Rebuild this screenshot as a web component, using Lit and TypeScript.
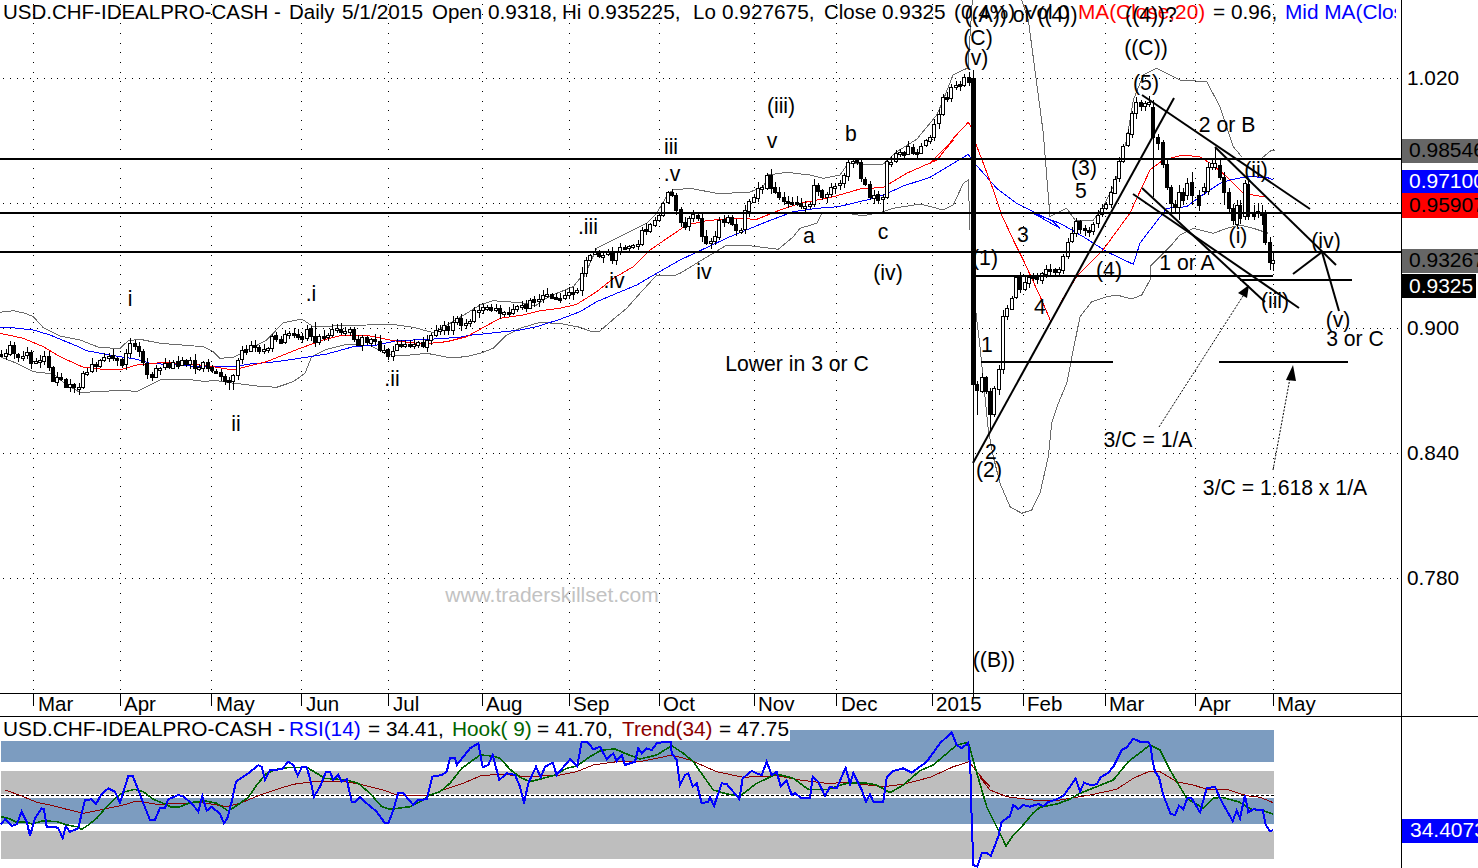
import { LitElement, html, css, svg } from "lit";
import { customElement } from "lit/decorators.js";

type P = [number, number];
const pts = (a: number[], ox: number, oy: number): P[] => {
  const o: P[] = [];
  for (let i = 0; i + 1 < a.length; i += 2) o.push([ox + a[i] / 3, oy + a[i + 1] / 3]);
  return o;
};
const str = (p: P[]) => p.map((q) => q[0].toFixed(1) + "," + q[1].toFixed(1)).join(" ");
const between = (p: P[], a: number, b: number) => p.filter((q) => q[0] >= a && q[0] <= b);

/* ---------- price chart overlays ---------- */
const upper = str([
  ...between(pts([0,187,40,182,75,190,100,200,130,233,180,258,240,270,300,293,360,295,385,272,420,268,480,280,610,290,640,305,660,325,700,322,745,300,800,270,850,218,905,207,940,230,1000,228,1100,225,1170,222,1240,232,1300,248,1350,220,1400,190,1450,155,1500,152], 0, 250), 0, 479),
  ...pts([0,165,40,152,80,155,140,160,165,168,190,150,230,130,280,110,300,85], 480, 250),
  ...between(pts([245,545,290,445,370,405,440,370,470,340,505,280,520,270,570,265,650,280,745,278,790,260,805,225,860,217,930,225,970,235,1020,225,1045,190,1090,192,1150,192,1190,155,1250,118,1310,45,1330,0], 500, 100), 581, 960),
  [953, 75], [963, 70], [968, 68], [973, -10], [1020, -10],
  ...pts([185,0,205,60,230,250,250,400,270,650,320,625,345,660,400,660,430,620,465,550,500,420,520,300,550,225,590,205,660,240,740,245,780,320,820,440,845,470], 960, 0),
]);
const upperEnd = str(pts([905,475,935,450,945,452], 960, 0));
const lower = str([
  ...between(pts([0,320,50,340,100,365,160,372,200,405,240,427,300,425,370,420,410,425,440,410,480,390,560,388,620,395,640,390,680,397,770,408,830,412,880,395,915,370,935,320,980,298,1040,283,1110,287,1160,310,1200,318,1280,310,1350,323,1400,320,1450,310,1500,285], 0, 250), 0, 479),
  ...pts([0,310,40,295,80,255,120,235,180,217,250,222,300,232,330,243,360,243,400,208,440,175,480,130,530,75,580,78,600,70], 480, 250),
  ...between(pts([680,435,750,437,835,448,880,410,900,385,950,370,965,340,1040,340,1090,347,1150,335,1180,325,1260,312,1330,330,1360,315,1390,250,1405,240,1410,390], 500, 100), 681, 980),
]);
const lower2 = str([
  ...pts([48,100,60,200,85,450,100,530,120,610,150,680,185,700,215,690,240,640,265,530,275,430,295,370,320,310,340,210,360,110,395,65,440,50,470,45,515,57,545,45,570,0], 960, 280),
  ...pts([570,800,630,740,660,705,700,685,760,700,800,685,840,675,880,685,925,700], 960, 0),
]);
const midMA = str([
  ...between(pts([0,232,45,234,100,240,150,255,230,288,260,302,330,315,410,328,450,340,530,345,600,350,700,350,750,342,830,335,930,320,980,312,1060,290,1130,285,1190,272,1290,268,1380,262,1430,252,1500,245], 0, 250), 0, 479),
  ...pts([0,253,120,240,170,230,240,208,300,185,350,155,410,130,470,105,530,70,600,30], 480, 250),
  ...between(pts([690,410,800,365,880,335,950,325,1015,320,1100,300,1150,285,1210,258,1290,232,1360,190,1405,163], 500, 100), 681, 975),
  ...pts([130,305,200,385,260,430,330,465,370,485,390,505], 930, 60),
  ...pts([220,640,300,670,370,710,440,755,520,793,540,730,570,690,620,625,680,620,720,590,780,550,810,540,860,530,920,532,940,540], 960, 0),
]);
const redMA = str([
  ...between(pts([0,250,70,265,130,290,180,320,250,352,300,357,370,357,410,345,480,338,560,340,640,350,700,360,800,335,900,295,970,270,1020,257,1110,258,1180,272,1270,282,1340,275,1400,260,1500,215], 0, 250), 0, 479),
  ...pts([0,238,60,205,130,195,180,182,240,175,290,163,350,125,400,85,460,50,510,0], 480, 250),
  ...between(pts([560,375,620,362,700,355,770,358,840,330,900,310,1000,290,1080,267,1150,262,1220,220,1310,180,1360,120], 500, 100), 681, 955),
  ...pts([0,310,30,290,70,235,115,187,125,205,135,245,160,310,190,390,215,465,250,540,280,600], 930, 60),
  ...pts([190,780,245,900], 960, 0),
  [1051, 322], [1062, 300], [1077, 276], [1103, 250], [1130, 213], [1150, 170], [1163, 160], [1183, 155], [1200, 157], [1213, 165], [1227, 177], [1243, 193], [1253, 195], [1265, 197],
]);

/* ---------- candles ---------- */
const closes: P[] = [
  ...pts([0,310,30,298,60,315,75,295,90,350,105,350,120,320,140,315,150,375,190,400,215,410,240,400,250,355,290,345,310,325,345,320,370,345,385,285,405,295,430,335,450,385,475,360,510,345,540,335,580,345,610,340,630,365,670,385,695,385,710,320,755,295,800,285,815,268,860,262,890,258,925,248,945,285,970,258,1010,238,1045,238,1060,270,1100,275,1150,295,1160,315,1190,275,1215,270,1245,288,1290,265,1320,245,1350,225,1400,205,1440,178,1470,180,1500,190], 0, 250),
  ...pts([130,595,180,590,210,565,243,565,246,487,270,460,340,468,355,435,390,440,415,435,420,390,470,360,505,265,530,320,545,375,590,350,605,415,640,420,655,380,665,350,690,355,720,400,730,330,755,295,800,235,815,270,840,295,880,315,910,320,935,320,940,248,970,300,985,270,1025,240,1040,195,1075,190,1085,240,1110,290,1158,288,1161,190,1185,165,1220,150,1240,155,1285,125,1310,50,1330,0], 500, 100),
  [945, 100], [955, 82], [971, 78], [973, 385], [977, 390], [982, 378], [990, 412], [995, 386], [1000, 367], [1002, 322], [1007, 312], [1012, 300],
  ...pts([160,810,175,860,200,830,220,840,240,820,260,815,290,810,320,745,345,665,365,680,385,680,420,645,450,590,470,530,485,450,510,370,520,310,540,315,575,320], 960, 0),
];
const interp = (x: number) => {
  for (let i = 1; i < closes.length; i++) {
    if (x <= closes[i][0]) {
      const [x0, y0] = closes[i - 1];
      const [x1, y1] = closes[i];
      return x1 === x0 ? y1 : y0 + ((y1 - y0) * (x - x0)) / (x1 - x0);
    }
  }
  return closes[closes.length - 1][1];
};
let seed = 12345;
const rnd = () => ((seed = (seed * 1103515245 + 12345) & 0x7fffffff) >>> 8) % 1000 / 1000;

const wickOverride: Record<number, [number?, number?]> = {
  231: [undefined, 390], 314: [322], 882: [undefined, 212],
  1003: [310], 977: [undefined, 415], 990: [undefined, 432],
};
/* x, top, bottom, up?, wick top, wick bottom: the last weeks, read bar by bar */
const lastBars: [number, number, number, boolean, number, number][] = [
  [1153,107,137,false,100,197],[1158,137,143,false,134,150],[1163,142,164,false,140,168],[1167,164,187,false,160,190],
  [1171,187,203,false,185,212],[1175,204,207,false,200,212],[1179,192,207,true,185,220],[1183,192,200,false,188,205],
  [1187,183,195,true,178,200],[1192,182,195,false,172,205],[1199,195,205,false,190,211],[1204,187,191,true,183,195],
  [1208,167,191,true,162,195],[1212,163,167,true,158,170],[1215,163,167,true,147,170],[1220,165,177,false,160,180],
  [1224,177,192,false,172,205],[1229,192,208,false,188,212],[1233,208,220,false,204,225],[1237,205,224,true,200,227],
  [1240,205,218,false,200,224],[1245,183,216,true,180,220],[1248,184,216,false,180,220],[1254,212,216,false,205,220],
  [1258,211,213,true,203,218],[1262,212,215,false,205,225],[1265,212,242,false,210,245],[1270,242,262,false,237,270],
  [1273,260,263,true,252,271],
];
const buildCandles = () => {
  let white = "", black = "", wick = "";
  const xs: number[] = [];
  for (let x = 973 - 4.3 * 226; x < 1150; x += 4.3) if (x > 0) xs.push(x);
  let prev = interp(xs[0]);
  for (const xf of xs) {
    const X = Math.round(xf);
    if (X === 973) { prev = 385; continue; }
    const c = interp(xf) + (rnd() - 0.5) * 9;
    const o = prev + (rnd() - 0.5) * 1.5;
    let top = Math.round(Math.min(o, c));
    let bot = Math.round(Math.max(o, c));
    if (bot - top < 2) bot = top + 2;
    let hi = top - Math.round(rnd() * 5) - 1;
    let lo = bot + Math.round(rnd() * 5) + 1;
    for (const k of Object.keys(wickOverride)) {
      if (Math.abs(+k - X) <= 2) {
        const [h, l] = wickOverride[+k];
        if (h !== undefined) hi = h;
        if (l !== undefined) lo = l;
      }
    }
    wick += `M${X + 0.5} ${hi}V${lo}`;
    const r = `M${X - 1.5} ${top + 0.5}h3v${bot - top}h-3z`;
    if (c < o) white += r; else black += r;
    prev = c;
  }
  for (const [X, top, bot, up, hi, lo] of lastBars) {
    wick += `M${X + 0.5} ${hi}V${lo}`;
    const r = `M${X - 1.5} ${top + 0.5}h3v${bot - top}h-3z`;
    if (up) white += r; else black += r;
  }
  return { white, black, wick };
};
const candles = buildCandles();

/* ---------- RSI ---------- */
const rsi = str([
  ...pts([3,403,15,388,35,408,50,403,65,365,80,395,90,438,105,385,125,355,132,358,140,410,165,410,175,415,188,444,197,410,210,425,235,415,245,370,255,330,275,328,288,342,303,315,325,295,345,305,360,338,385,258,398,258,415,300,430,340,450,390,465,390,480,353,495,353,505,328,535,315,550,320,575,340,595,365,607,318,620,362,635,350,660,372,672,400,682,385,695,335,708,275,745,250,775,226,785,230,795,270,810,240,845,238,865,215,880,225,893,257,905,232,920,232,930,265,942,320,960,290,978,245,990,245,1000,270,1015,255,1025,275,1040,268,1055,335,1065,335,1080,320,1100,340,1130,365,1155,400,1165,400,1180,360,1195,308,1210,310,1240,345,1255,330,1280,328,1297,260,1325,255,1340,245,1350,205,1365,205,1370,225,1390,200,1410,175,1435,160,1448,232,1465,225,1478,195,1498,270], 0, 690),
  ...pts([20,250,45,255,60,290,72,340,85,280,108,230,122,262,135,230,158,218,170,255,210,208,232,228,245,155,262,155,280,178,300,170,320,208,340,190,350,213,365,195,375,225,405,215,415,175,425,190,440,175,455,180,470,160,495,155,512,155,515,190,530,210,540,285,555,255,565,250,578,290,590,280,605,340,625,335,630,322,642,348,665,280,680,282,718,327,728,265,755,243,770,250,785,255,800,215,815,255,830,245,842,290,860,272,875,315,885,310,905,325,930,323,938,260,955,275,975,318,990,290,1010,295,1037,233,1050,282,1060,250,1085,300,1098,335,1110,312,1120,335,1150,335,1160,262,1180,243,1210,235,1235,248,1280,215,1320,160,1355,127,1370,165,1385,175,1405,158,1412,260,1412,300,1415,385,1420,525,1432,530,1440,505], 500, 690),
  ...pts([5,490,20,488,32,498,55,440,65,395,90,378,100,345,115,357,130,345,150,350,175,342,190,348,205,336,225,330,250,318,270,290,287,265,300,305,312,278,330,285,350,283,362,262,385,248,400,230,425,180,440,172,460,146,480,155,505,155,512,170,518,215,525,245,537,262,550,315,572,372,585,375,597,347,610,358,622,325,635,325,660,367,680,295,705,290,725,335,758,393,770,362,780,385,795,315,805,367,820,358,848,360,857,405,870,423,880,421], 980, 690),
]);
const hook = str([
  ...pts([3,380,25,385,50,397,75,395,95,402,130,392,170,395,200,405,230,410,245,418,265,405,290,385,320,350,350,320,375,305,405,298,430,305,460,328,490,340,515,352,540,350,570,338,615,333,650,340,685,363,720,340,745,322,770,285,800,250,830,238,870,232,920,232,950,250,975,265,1040,270,1075,280,1110,310,1145,350,1170,358,1230,350,1260,335,1290,315,1320,305,1350,280,1385,235,1440,195,1480,198], 0, 690),
  ...pts([0,205,30,238,60,262,90,275,130,265,165,255,200,235,230,228,270,200,305,180,345,177,380,192,420,207,470,195,515,167,550,190,580,215,610,258,640,300,680,312,720,318,770,280,830,252,880,265,925,298,985,298,1040,280,1090,278,1130,285,1170,308,1210,285,1260,242,1300,225,1370,165,1405,157,1425,230,1460,350], 500, 690),
  ...pts([30,370,60,430,78,468,100,435,125,410,160,368,180,352,230,342,265,330,300,310,350,290,400,270,445,215,510,165,540,180,570,240,620,325,670,355,700,325,725,322,775,335,815,358,850,362,880,373], 980, 690),
]);
const trend = str([
  ...pts([15,300,60,316,110,337,150,345,200,358,250,370,310,358,370,345,410,333,470,343,550,340,610,338,680,350,720,340,780,315,830,298,880,283,940,275,1040,275,1090,285,1150,300,1190,315,1280,318,1330,300,1390,280,1440,258], 0, 690),
  ...pts([0,252,60,258,120,258,180,255,230,245,280,225,350,215,420,215,470,205,515,195,570,210,650,245,730,262,830,257,900,270,980,280,1040,278,1150,290,1210,283,1290,262,1360,230,1408,215,1430,245,1470,290], 500, 690),
  ...pts([0,262,30,300,80,320,160,330,240,330,330,315,410,298,460,265,510,243,540,245,590,275,640,285,680,298,740,298,800,317,840,322,880,338], 980, 690),
]);

/* ---------- static data ---------- */
const ticks = [33, 120, 211, 301, 388, 482, 569, 659, 754, 836, 932, 1023, 1105, 1195, 1273];
const months: [string, number][] = [["Mar",38],["Apr",124],["May",216],["Jun",306],["Jul",393],["Aug",486],["Sep",573],["Oct",663],["Nov",758],["Dec",841],["2015",936],["Feb",1027],["Mar",1109],["Apr",1199],["May",1277]];
const labels: [string, number, number][] = [
  ["i",130,306],[".i",311,301],[".ii",392,386],["ii",236,431],[".iii",588,234],[".iv",614,288],["iv",704,279],["iii",671,154],[".v",672,181],["(iii)",781,113],["v",772,148],["b",851,141],["a",809,243],["c",883,239],["(iv)",888,280],["Lower in 3 or C",797,371],
  ["(C)",978,45],["(v)",976,65],["((A)) or ((4))",1021,22],["((4))?",1151,22],["((C))",1146,55],["(5)",1146,90],["2 or B",1227,132],["(ii)",1256,177],["(3)",1084,175],["5",1081,198],["3",1023,242],["(1)",985,265],["(4)",1109,277],["1 or A",1187,270],["(i)",1238,243],["(iv)",1326,248],
  ["4",1040,314],["(iii)",1275,308],["(v)",1338,327],["3 or C",1355,346],["1",987,352],["2",991,459],["(2)",989,477],["3/C = 1/A",1148,447],["3/C = 1.618 x 1/A",1285,495],["((B))",994,667],
];
const titleParts: [string, number, string][] = [
  ["USD.CHF-IDEALPRO-CASH -", 3, ""], ["Daily", 289, ""], ["5/1/2015", 342, "num"], ["Open", 432, ""], ["0.9318,", 488, "num"],
  ["Hi", 562, ""], ["0.935225,", 588, "num"], ["Lo", 693, ""], ["0.927675,", 722, "num"], ["Close", 824, ""], ["0.9325", 882, "num"],
  ["(0.4%)", 954, "num"], ["Vol", 1024, ""], ["0", 1058, "num"],
];
const thickLines: number[][] = [
  [0,159,1401,159],[0,213,1401,213],[0,252,1401,252],
  [975,276,1273,276],[1240,280,1352,280],[981,362,1113,362],[1219,362,1348,362],
  [973,463,1174,98],[1142,95,1310,209],[1215,147,1336,265],[1142,188,1265,302],[1133,194,1299,308],
  [1293,274,1322,252],[1322,252,1339,311],
];
const rsiParts: [string, number, string][] = [
  ["USD.CHF-IDEALPRO-CASH -", 3, ""], ["RSI(14)", 289, "blue"], ["= 34.41,", 368, ""], ["Hook( 9)", 452, "green"],
  ["= 41.70,", 537, ""], ["Trend(34)", 622, "maroon"], ["= 47.75", 719, ""],
];
const tags: [string, number, number, number, string, string, number][] = [
  ["0.98546",139,24,1478,"#666666","#000",18],
  ["0.97100",170,23,1478,"#0000ff","#fff",18],
  ["0.95907",193,25,1478,"#ff0000","#000",19],
  ["0.93267",249,24,1478,"#666666","#000",18],
  ["0.9325",274,24,1476,"#000000","#fff",19],
];

@customElement("app-root")
export class AppRoot extends LitElement {
  static styles = css`
    :host { display: block; width: 1478px; height: 868px; background: #fff; overflow: hidden; }
    .page { display: grid; grid-template-columns: 1401px 77px; grid-template-rows: 693px 24px 151px; width: 1478px; height: 868px; }
    svg { display: block; overflow: hidden; }
    .axis { border-left: 1px solid #000; }
    .datebar { box-sizing: border-box; border-top: 1px solid #000; border-bottom: 1px solid #000; height: 24px; }
    .corner { box-sizing: border-box; border-left: 1px solid #000; border-bottom: 1px solid #000; height: 24px; }
    text { font-family: "Liberation Sans", Arial, sans-serif; font-size: 20.5px; fill: #000; }
    .num { font-size: 20.8px; }
    .lab { font-size: 21.2px; text-anchor: middle; }
    .price { font-size: 20.8px; }
    .tag { font-size: 21px; }
    .rt { font-size: 20.8px; }
    .ma { font-size: 20.8px; }
    .red { fill: #ff0000; }
    .blue { fill: #0000ff; }
    .green { fill: #006400; }
    .maroon { fill: #8b0000; }
    .mark { fill: #c2c2c2; text-anchor: middle; font-size: 21px; }
    .grid { stroke: #000; stroke-width: 1; shape-rendering: crispEdges; }
    .grid-v { stroke-dasharray: 1 8.65; }
    .grid-h { stroke-dasharray: 1 5.8; }
    .line { fill: none; shape-rendering: crispEdges; }
    .bb { stroke: #6a6a6a; stroke-width: 1; }
    .ma-r { stroke: #ff0000; stroke-width: 1; }
    .ma-b { stroke: #0000ff; stroke-width: 1; }
    .thick { stroke: #000; stroke-width: 2; fill: none; }
    .h2 { shape-rendering: crispEdges; }
    .dash { stroke: #000; stroke-width: 1; stroke-dasharray: 2 1.5; fill: none; }
    .wick { stroke: #000; stroke-width: 1; fill: none; shape-rendering: crispEdges; }
    .cw { fill: #fff; stroke: #000; stroke-width: 1; shape-rendering: crispEdges; }
    .cb { fill: #000; stroke: #000; stroke-width: 1; shape-rendering: crispEdges; }
    .solid { fill: #000; }
    .white { fill: #fff; }
    .band-b { fill: #7c9cc0; }
    .band-g { fill: #bebebe; }
    .rsi { fill: none; stroke: #0000ff; stroke-width: 2; shape-rendering: crispEdges; }
    .hook { fill: none; stroke: #006400; stroke-width: 1.6; shape-rendering: crispEdges; }
    .trend { fill: none; stroke: #8b0000; stroke-width: 1; shape-rendering: crispEdges; }
    .rdash { stroke: #000; stroke-width: 1; stroke-dasharray: 3 2; shape-rendering: crispEdges; }
  `;

  private renderPlot() {
    return html`<svg width="1401" height="693" viewBox="0 0 1401 693">
      ${ticks.map((x) => svg`<line class="grid grid-v" x1=${x + 0.5} y1="4" x2=${x + 0.5} y2="693"></line>`)}
      ${[78, 203, 328, 453, 578].map((y) => svg`<line class="grid grid-h" x1="3" y1=${y + 0.5} x2="1401" y2=${y + 0.5}></line>`)}
      <text class="mark" x="552" y="602">www.traderskillset.com</text>
      <polyline class="line bb" points=${upper}></polyline>
      <polyline class="line bb" points=${upperEnd}></polyline>
      <polyline class="line bb" points=${lower}></polyline>
      <polyline class="line bb" points=${lower2}></polyline>
      <polyline class="line ma-b" points=${midMA}></polyline>
      <polyline class="line ma-r" points=${redMA}></polyline>
      <path class="wick" d=${candles.wick}></path>
      <path class="cw" d=${candles.white}></path>
      <path class="cb" d=${candles.black}></path>
      <rect class="solid" x="971" y="78" width="5" height="307"></rect>
      <line class="wick" x1="973.5" y1="70" x2="973.5" y2="693"></line>
      ${thickLines.map((l) => svg`<line class=${l[1] === l[3] ? "thick h2" : "thick"} x1=${l[0]} y1=${l[1]} x2=${l[2]} y2=${l[3]}></line>`)}
      <line class="dash" x1="1159" y1="427" x2="1243" y2="296"></line>
      <line class="dash" x1="1273" y1="470" x2="1290" y2="378"></line>
      <polygon class="solid" points="1249,285 1247,298 1238,293"></polygon>
      <polygon class="solid" points="1293,365 1296,381 1286,380"></polygon>
      ${titleParts.map((t) => svg`<text class=${t[2]} x=${t[1]} y="19">${t[0]}</text>`)}
      <svg x="0" y="0" width="1396" height="40">
        <text class="ma red" x="1078" y="19">MA(Close,20)</text>
        <text class="ma" x="1213" y="19">= 0.96,</text>
        <text class="ma blue" x="1285" y="19">Mid MA(Close,20) = 0.97</text>
      </svg>
      ${labels.map((l) => svg`<text class="lab" x=${l[1]} y=${l[2]}>${l[0]}</text>`)}
    </svg>`;
  }

  private renderPriceAxis() {
    return html`<div class="axis"><svg width="76" height="693" viewBox="1402 0 76 693">
      ${tags.map((t) => svg`<rect x="1402" y=${t[1]} width=${t[3] - 1402} height=${t[2]} style="fill:${t[4]}"></rect>
        <text class="tag" x="1409" y=${t[1] + t[6]} style="fill:${t[5]}">${t[0]}</text>`)}
      ${([["1.020",78],["0.900",328],["0.840",453],["0.780",578]] as [string, number][]).map((a) => svg`<text class="price" x="1407" y=${a[1] + 7}>${a[0]}</text>`)}
    </svg></div>`;
  }

  private renderDates() {
    return html`<div class="datebar"><svg width="1401" height="22" viewBox="0 694 1401 22">
      ${ticks.map((x) => svg`<line class="wick" x1=${x + 0.5} y1="694" x2=${x + 0.5} y2="706"></line>`)}
      <line class="wick" x1="973.5" y1="694" x2="973.5" y2="698"></line>
      ${months.map((m) => svg`<text x=${m[1]} y="711">${m[0]}</text>`)}
    </svg></div>`;
  }

  private renderRsi() {
    return html`<svg width="1401" height="151" viewBox="0 717 1401 151">
      <rect class="band-b" x="1" y="730" width="1273" height="32"></rect>
      <rect class="band-g" x="1" y="771" width="1273" height="23"></rect>
      <rect class="band-b" x="1" y="798" width="1273" height="26"></rect>
      <rect class="band-g" x="1" y="831" width="1273" height="28"></rect>
      <line class="rdash" x1="1" y1="795.5" x2="1274" y2="795.5"></line>
      <polyline class="trend" points=${trend}></polyline>
      <polyline class="hook" points=${hook}></polyline>
      <polyline class="rsi" points=${rsi}></polyline>
      <rect class="white" x="0" y="717" width="790" height="24"></rect>
      ${rsiParts.map((t) => svg`<text class="rt ${t[2]}" x=${t[1]} y="736">${t[0]}</text>`)}
    </svg>`;
  }

  private renderRsiAxis() {
    return html`<div class="axis"><svg width="76" height="151" viewBox="1402 717 76 151">
      <rect x="1402" y="819" width="76" height="24" style="fill:#0000ff"></rect>
      <text class="tag white" x="1410" y="837">34.4073</text>
    </svg></div>`;
  }

  render() {
    return html`<div class="page">
      ${this.renderPlot()}
      ${this.renderPriceAxis()}
      ${this.renderDates()}
      <div class="corner"></div>
      ${this.renderRsi()}
      ${this.renderRsiAxis()}
    </div>`;
  }
}
